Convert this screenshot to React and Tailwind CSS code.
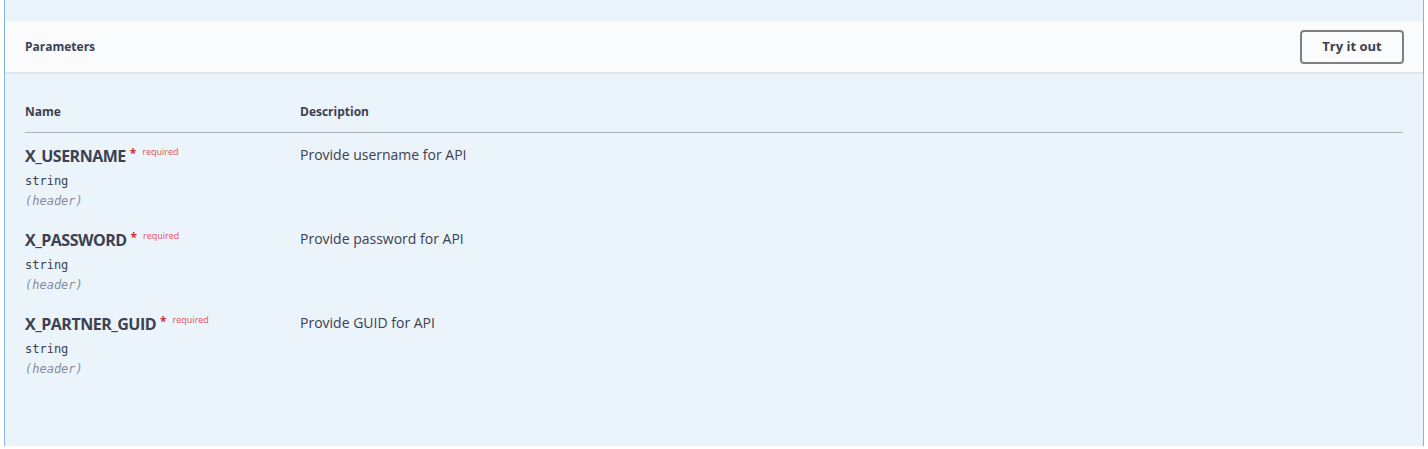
import React from 'react';

const params = [
  { name: 'X_USERNAME', type: 'string', where: '(header)', desc: 'Provide username for API' },
  { name: 'X_PASSWORD', type: 'string', where: '(header)', desc: 'Provide password for API' },
  { name: 'X_PARTNER_GUID', type: 'string', where: '(header)', desc: 'Provide GUID for API' },
];

function ParamRow({ name, type, where, desc }) {
  return (
    <div className="flex h-[84px]">
      <div className="w-[275px] shrink-0">
        <div className="flex items-start">
          <span className="text-[16px] leading-[22px] font-bold text-[#3b4151] font-['Open_Sans',sans-serif] tracking-[-0.5px]">
            {name}
          </span>
          <span className="ml-[4px] text-[12px] leading-[18px] text-[#c8323c] font-bold">*</span>
          <span className="ml-[6px] text-[9px] leading-[12px] text-[#e4515b] font-['Open_Sans',sans-serif] mt-[1px]">
            required
          </span>
        </div>
        <div className="mt-[6px] text-[12px] leading-[17px] text-[#3b4151] font-['DejaVu_Sans_Mono',monospace]">
          {type}
        </div>
        <div className="mt-[3px] text-[12px] leading-[17px] italic text-[#3b4151]/60 font-['DejaVu_Sans_Mono',monospace]">
          {where}
        </div>
      </div>
      <div className="text-[14px] leading-[20px] text-[#3b4151] font-['Open_Sans',sans-serif]">{desc}</div>
    </div>
  );
}

export default function App() {
  return (
    <div className="w-[1428px] h-[449px] bg-white overflow-hidden">
      <div className="ml-[4px] w-[1420px] h-[446px] bg-[#ebf3fb] border-x border-[#8ab4dc] pt-[21px]">
        <div className="h-[51px] bg-[#fafbfc] shadow-[0_1px_2px_rgba(0,0,0,0.1)] flex items-center justify-between pl-[20px] pr-[19px]">
          <h4 className="text-[12px] font-bold text-[#3b4151] font-['Open_Sans',sans-serif]">Parameters</h4>
          <button className="w-[104px] h-[34px] border-2 border-[#808080] rounded-[4px] bg-transparent text-[13px] font-bold text-[#3b4151] font-['Open_Sans',sans-serif]">
            Try it out
          </button>
        </div>
        <div className="px-[20px] pt-[29px]">
          <div className="flex h-[32px] items-start pt-[3px] border-b border-[#3b4151]/35">
            <div className="w-[275px] text-[12px] leading-[16px] font-bold text-[#3b4151] font-['Open_Sans',sans-serif]">Name</div>
            <div className="text-[12px] leading-[16px] font-bold text-[#3b4151] font-['Open_Sans',sans-serif]">Description</div>
          </div>
          <div className="pt-[12px]">
            {params.map((p) => (
              <ParamRow key={p.name} {...p} />
            ))}
          </div>
        </div>
      </div>
    </div>
  );
}
